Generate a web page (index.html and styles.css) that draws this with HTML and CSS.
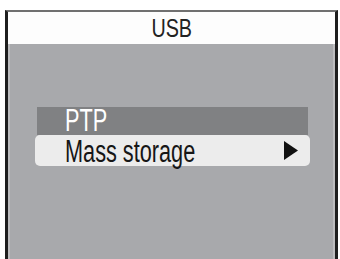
FILE: index.html
```html
<!DOCTYPE html>
<html>
<head>
<meta charset="utf-8">
<link rel="stylesheet" href="styles.css">
</head>
<body>
<div class="screen">
  <div class="header"><span class="title">USB</span></div>
  <div class="body">
    <div class="menu">
      <div class="item item-dim"><span class="label">PTP</span></div>
      <div class="item item-sel"><span class="label">Mass storage</span>
        <svg class="arrow" width="14" height="19" viewBox="0 0 14 19"><polygon points="0,0 14,9.5 0,19" fill="#111"/></svg>
      </div>
    </div>
  </div>
</div>
</body>
</html>
```
FILE: styles.css
```css
html, body {
  margin: 0;
  padding: 0;
  background: #ffffff;
}
body {
  width: 340px;
  height: 259px;
  overflow: hidden;
  font-family: "Liberation Sans", Arial, sans-serif;
}
.screen {
  margin: 10px 0 0 5px;
  width: 333px;
  height: 249px;
  box-sizing: border-box;
  border-top: 2px solid #707070;
  border-left: 3px solid #1e1e1e;
  border-right: 3px solid #1e1e1e;
  display: flex;
  flex-direction: column;
}
.header {
  height: 32px;
  background: #fdfdfd;
  text-align: center;
  line-height: 32px;
  font-size: 26px;
  color: #222;
}
.title {
  display: inline-block;
  transform: scaleX(0.76);
  transform-origin: center;
}
.body {
  flex: 1;
  background: #a8a9ac;
  border-left: 2px solid #bdbdbf;
  border-right: 2px solid #bdbdbf;
  padding-top: 63px;
}
.menu {
  display: flex;
  flex-direction: column;
}
.item {
  font-size: 31px;
  display: flex;
  align-items: flex-start;
  box-sizing: border-box;
}
.label {
  display: inline-block;
  line-height: 22px;
  transform: scaleX(0.7);
  transform-origin: left center;
  white-space: nowrap;
}
.item-dim {
  margin-left: 27px;
  width: 271px;
  height: 28px;
  background: #808183;
  color: #ffffff;
  padding: 3px 0 0 28px;
}
.item-sel {
  margin-left: 25px;
  width: 275px;
  height: 31px;
  background: #ececec;
  border-radius: 5px;
  color: #161616;
  padding: 6px 12px 0 30px;
  justify-content: space-between;
}
.arrow {
  display: block;
  margin-top: 0;
}
```
